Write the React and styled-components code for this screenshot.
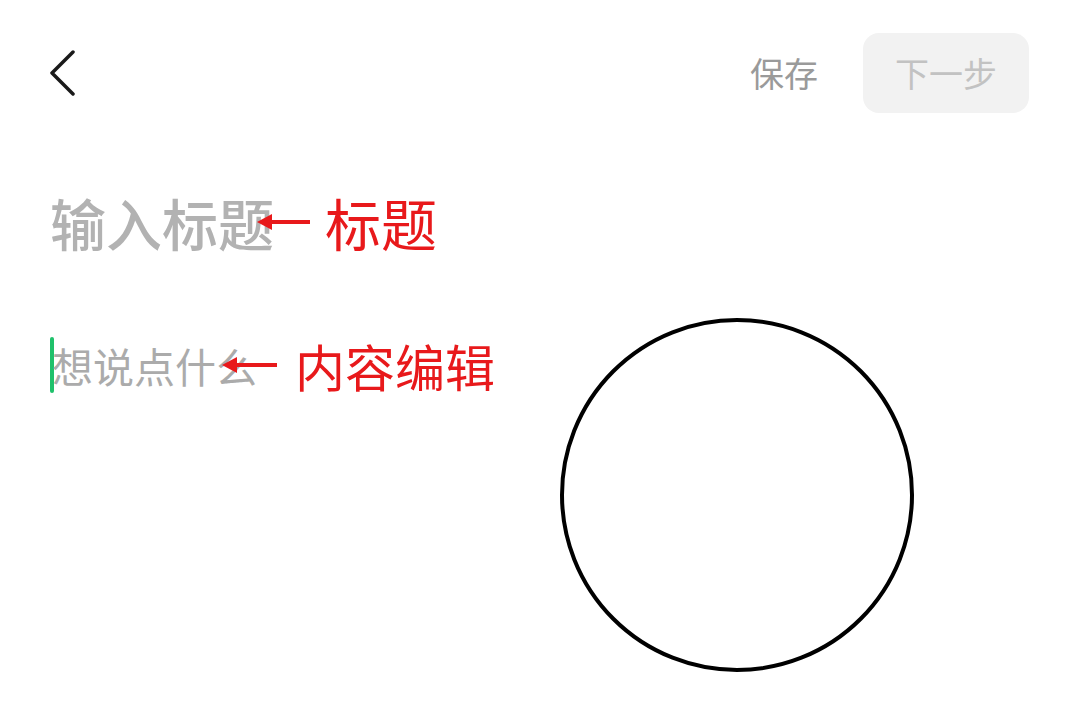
import React from "react";
import styled, { createGlobalStyle } from "styled-components";

const GlobalStyle = createGlobalStyle`
  html, body {
    margin: 0;
    padding: 0;
    background: #ffffff;
  }
  body {
    font-family: "Noto Sans CJK SC", "Noto Sans", sans-serif;
  }
`;

const Page = styled.div`
  position: relative;
  width: 1080px;
  height: 720px;
  overflow: hidden;
  background: #ffffff;
`;

const Header = styled.header`
  display: flex;
  align-items: center;
  justify-content: space-between;
  height: 80px;
  padding: 33px 51px 0 50px;
`;

const BackButton = styled.button`
  display: flex;
  align-items: center;
  padding: 0;
  border: 0;
  background: none;
  cursor: pointer;
`;

const Actions = styled.div`
  display: flex;
  align-items: center;
  gap: 45px;
`;

const SaveLink = styled.span`
  font-size: 34px;
  line-height: 1;
  color: #9a9a9a;
`;

const NextButton = styled.button`
  width: 166px;
  height: 80px;
  border: 0;
  border-radius: 16px;
  background: #f2f2f2;
  color: #c2c2c2;
  font-family: inherit;
  font-size: 34px;
  line-height: 1;
`;

const Body = styled.main`
  display: flex;
  flex-direction: column;
  padding: 0 50px;
`;

const Row = styled.div`
  display: flex;
  align-items: center;
  margin-top: ${(p) => p.$top}px;
`;

const TitlePlaceholder = styled.div`
  font-size: 56px;
  line-height: 1;
  font-weight: 500;
  color: #b2b2b2;
`;

const Cursor = styled.span`
  width: 4px;
  height: 56px;
  border-radius: 2px;
  background: #1fc16b;
`;

const ContentPlaceholder = styled.div`
  font-size: 41px;
  line-height: 1;
  color: #ababab;
  margin-left: -2px;
`;

const Note = styled.div`
  display: flex;
  align-items: center;
  gap: ${(p) => p.$gap}px;
  margin-left: ${(p) => p.$shift}px;
`;

const NoteLabel = styled.span`
  font-size: ${(p) => p.$size}px;
  line-height: 1;
  color: #e8191b;
`;

const Circle = styled.div`
  position: absolute;
  left: 560px;
  top: 318px;
  width: 354px;
  height: 354px;
  box-sizing: border-box;
  border: 4px solid #000000;
  border-radius: 50%;
`;

function Arrow({ width }) {
  return (
    <svg width={width} height="18" viewBox={`0 0 ${width} 18`}>
      <polygon points="0,9 15,1 15,17" fill="#e8191b" />
      <rect x="12" y="7" width={width - 12} height="4" fill="#e8191b" />
    </svg>
  );
}

const App = () => {
  return (
    <Page>
      <GlobalStyle />
      <Header>
        <BackButton aria-label="返回">
          <svg width="26" height="46" viewBox="0 0 26 46">
            <polyline
              points="23,2 2,23 23,44"
              fill="none"
              stroke="#1a1a1a"
              strokeWidth="3.5"
              strokeLinecap="round"
              strokeLinejoin="round"
            />
          </svg>
        </BackButton>
        <Actions>
          <SaveLink>保存</SaveLink>
          <NextButton>下一步</NextButton>
        </Actions>
      </Header>

      <Body>
        <Row $top={81}>
          <TitlePlaceholder>输入标题</TitlePlaceholder>
          <Note $shift={-17} $gap={15}>
            <Arrow width={53} />
            <NoteLabel $size={56}>标题</NoteLabel>
          </Note>
        </Row>

        <Row $top={87}>
          <Cursor />
          <ContentPlaceholder>想说点什么</ContentPlaceholder>
          <Note $shift={-35} $gap={18}>
            <Arrow width={55} />
            <NoteLabel $size={50}>内容编辑</NoteLabel>
          </Note>
        </Row>
      </Body>

      <Circle />
    </Page>
  );
};

export default App;
